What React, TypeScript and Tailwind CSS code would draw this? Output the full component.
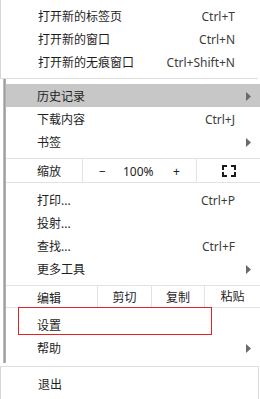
import React from "react";

const font = { fontFamily: '"Noto Sans", "Noto Sans CJK SC", sans-serif' };

const Arrow = () => (
  <svg width="5" height="9" viewBox="0 0 5 9" className="shrink-0">
    <path d="M0 0 L5 4.5 L0 9 Z" fill="#6a6a6a" />
  </svg>
);

const FullScreen = () => (
  <svg width="14" height="12" viewBox="0 0 14 12">
    <path
      d="M1 5V1h4M9 1h4v4M13 7v4H9M5 11H1V7"
      fill="none"
      stroke="#1a1a1a"
      strokeWidth="2"
    />
  </svg>
);

type Item = { label: string; shortcut?: string; sub?: boolean; active?: boolean };

const Row = ({ item }: { item: Item }) => (
  <div
    className={
      "flex items-center h-[23px] pt-[2px] pl-[31px] " +
      (item.sub ? "pr-[9px] " : "pr-[25px] ") +
      (item.active ? "bg-[#c7c7c7]" : "")
    }
  >
    <span className="flex-1 text-[#1e1e1e]">{item.label}</span>
    {item.shortcut && <span className="text-[#3c3c3c]">{item.shortcut}</span>}
    {item.sub && <Arrow />}
  </div>
);

const topItems: Item[] = [
  { label: "打开新的标签页", shortcut: "Ctrl+T" },
  { label: "打开新的窗口", shortcut: "Ctrl+N" },
  { label: "打开新的无痕窗口", shortcut: "Ctrl+Shift+N" },
];

const group1: Item[] = [
  { label: "历史记录", sub: true, active: true },
  { label: "下载内容", shortcut: "Ctrl+J" },
  { label: "书签", sub: true },
];

const group2: Item[] = [
  { label: "打印...", shortcut: "Ctrl+P" },
  { label: "投射..." },
  { label: "查找...", shortcut: "Ctrl+F" },
  { label: "更多工具", sub: true },
];

const group3: Item[] = [{ label: "设置" }, { label: "帮助", sub: true }];

export default function App() {
  return (
    <div
      className="relative w-[260px] h-[399px] bg-white text-[12px] leading-none overflow-hidden flex flex-col"
      style={font}
    >
      {/* top menu */}
      <div className="border-l border-[#d6d6d6] pt-[5px] pb-[4px] border-b border-b-[#dedede] mr-[2px]">
        {topItems.map((it) => (
          <div key={it.label} className="flex items-center h-[23px] pt-[1px] pl-[37px] pr-[23px]">
            <span className="flex-1 text-[#1e1e1e]">{it.label}</span>
            <span className="text-[#3c3c3c]">{it.shortcut}</span>
          </div>
        ))}
      </div>

      {/* overlaid submenu panel */}
      <div className="flex ml-[3px] h-[284px]">
        <div className="w-[3px] bg-[linear-gradient(to_right,#cfcfcf,#9c9c9c,#bdbdbd)]" />
        <div className="flex-1 flex flex-col">
          <div className="pt-[5px] pb-[5px] border-b border-[#e3e3e3]">
            {group1.map((it) => (
              <Row key={it.label} item={it} />
            ))}
          </div>

          <div className="flex items-center h-[24px] border-b border-[#e3e3e3] text-[#1e1e1e]">
            <div className="w-[77px] h-full flex items-center pt-[2px] pl-[31px] border-r border-[#e3e3e3]">
              缩放
            </div>
            <div className="w-[114px] h-full relative border-r border-[#e3e3e3]">
              <span className="absolute left-[16px] top-[7px]">−</span>
              <span className="absolute left-[40px] top-[7px]">100%</span>
              <span className="absolute left-[90px] top-[7px]">+</span>
            </div>
            <div className="flex-1 h-full flex items-center justify-center pt-[1px]">
              <FullScreen />
            </div>
          </div>

          <div className="pt-[5px] pb-[5px] border-b border-[#e3e3e3]">
            {group2.map((it) => (
              <Row key={it.label} item={it} />
            ))}
          </div>

          <div className="flex items-center h-[22px] border-b border-[#e3e3e3] text-[#1e1e1e]">
            <div className="w-[92px] h-full flex items-center pt-[4px] pl-[31px] border-r border-[#e3e3e3]">
              编辑
            </div>
            <div className="w-[54px] h-full flex items-center justify-center pt-[2px] border-r border-[#e3e3e3]">
              剪切
            </div>
            <div className="w-[53px] h-full flex items-center justify-center pt-[2px] border-r border-[#e3e3e3]">
              复制
            </div>
            <div className="flex-1 h-full flex items-center justify-center pt-[1px]">粘贴</div>
          </div>

          <div className="pt-[5px]">
            {group3.map((it) => (
              <Row key={it.label} item={it} />
            ))}
          </div>
        </div>
      </div>

      {/* bottom */}
      <div className="flex-1 border-l border-[#d6d6d6] border-t border-t-[#dedede] border-r border-r-[#dcdcdc] mr-[1px] mt-[3px] pt-[6px]">
        <div className="flex items-center h-[23px] pt-[1px] pl-[37px] text-[#1e1e1e]">退出</div>
      </div>

      {/* annotation */}
      <div className="absolute left-[18px] top-[307px] w-[194px] h-[28px] border border-[#e02424]" />
    </div>
  );
}
